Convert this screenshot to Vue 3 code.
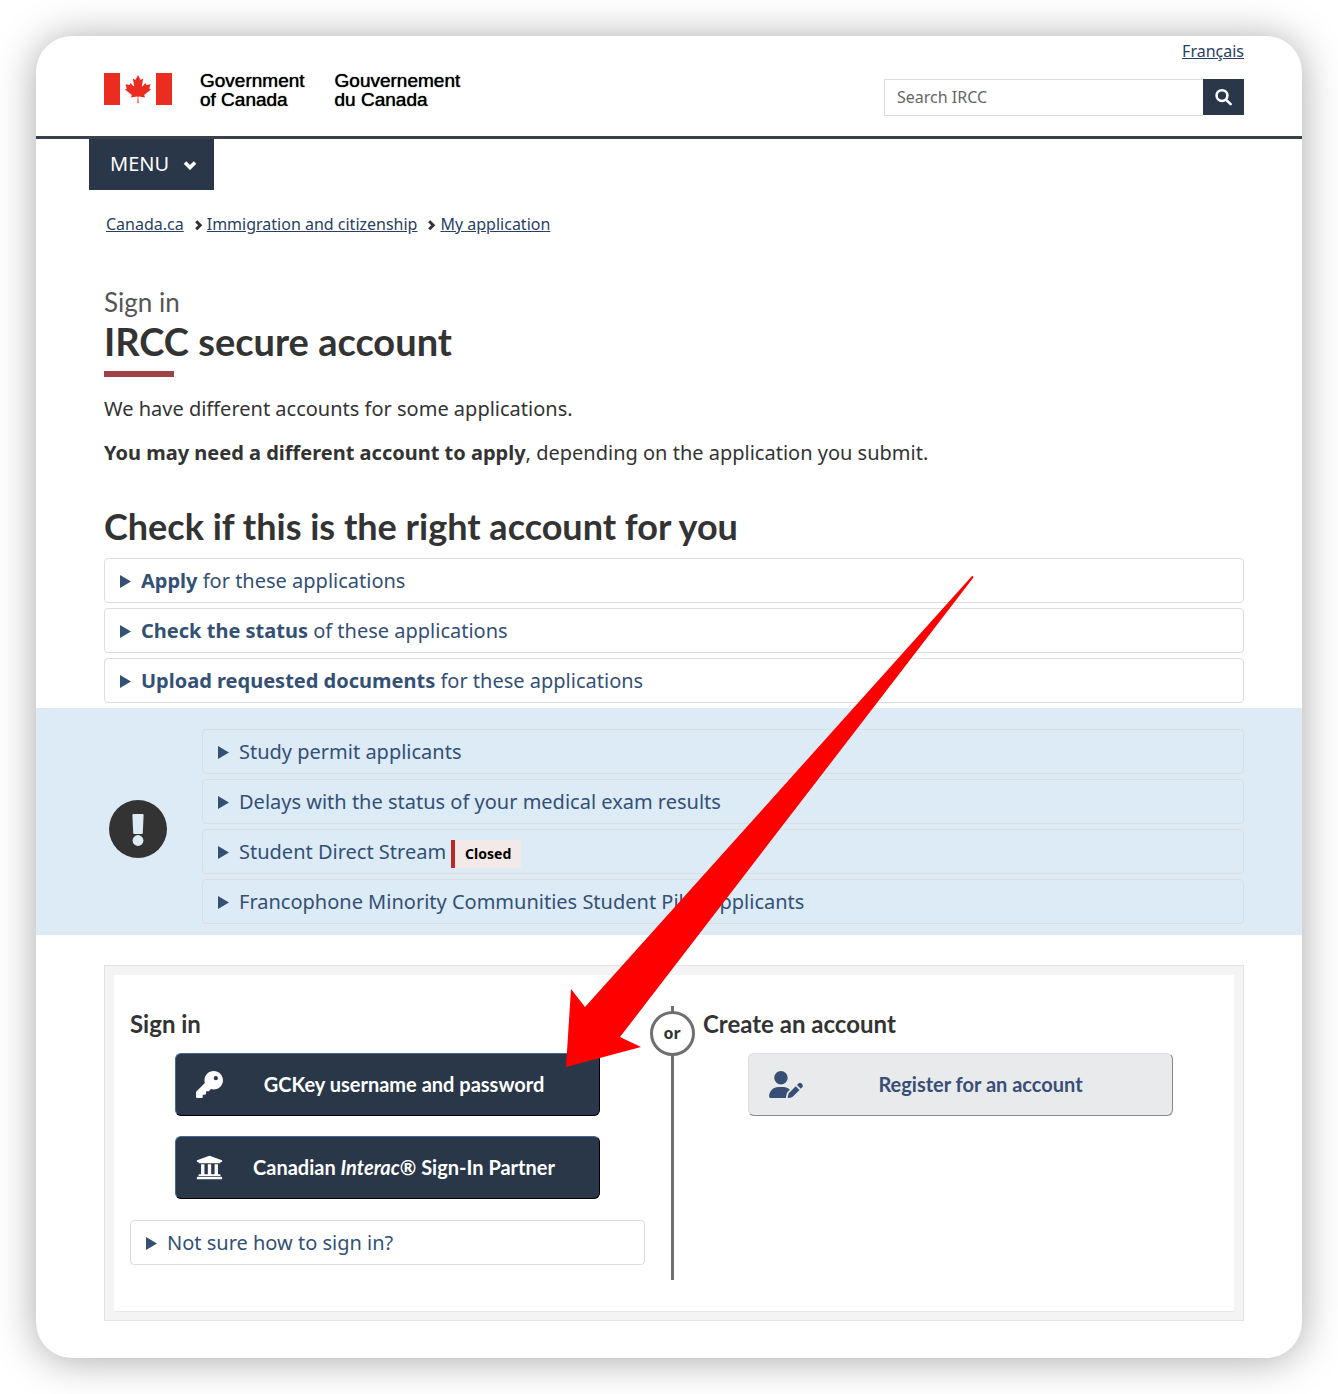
<script setup>
const checks = [
  { strong: 'Apply', rest: ' for these applications' },
  { strong: 'Check the status', rest: ' of these applications' },
  { strong: 'Upload requested documents', rest: ' for these applications' },
]

const notices = [
  { text: 'Study permit applicants' },
  { text: 'Delays with the status of your medical exam results' },
  { text: 'Student Direct Stream', tag: 'Closed' },
  { text: 'Francophone Minority Communities Student Pilot applicants' },
]

const crumbs = ['Canada.ca', 'Immigration and citizenship', 'My application']
</script>

<template>
  <div class="page">
    <header class="banner">
      <a class="brand" href="#" aria-label="Government of Canada">
        <svg class="flag" viewBox="0 0 68 32" aria-hidden="true">
          <path d="M0 0h16v32H0zM52 0h16v32H52z" />
          <path
            transform="translate(.4 -.8) scale(.007)"
            d="m4890 4430-45-863a95 95 0 0 1 111-98l859 151-116-320a65 65 0 0 1 20-73l941-762-212-99a65 65 0 0 1-34-79l186-572-542 115a65 65 0 0 1-73-38l-105-247-423 454a65 65 0 0 1-111-57l204-1052-327 189a65 65 0 0 1-91-27l-332-652-332 652a65 65 0 0 1-91 27l-327-189 204 1052a65 65 0 0 1-111 57l-423-454-105 247a65 65 0 0 1-73 38l-542-115 186 572a65 65 0 0 1-34 79l-212 99 941 762a65 65 0 0 1 20 73l-116 320 859-151a95 95 0 0 1 111 98l-45 863z"
          />
        </svg>
        <span class="brand-name">Government<br />of Canada</span>
        <span class="brand-name">Gouvernement<br />du Canada</span>
      </a>
      <div class="tools">
        <a class="lang" href="#" lang="fr">Français</a>
        <form class="search" role="search" @submit.prevent>
          <input type="search" placeholder="Search IRCC" aria-label="Search IRCC" />
          <button type="submit" aria-label="Search">
            <svg viewBox="0 0 18 18" aria-hidden="true">
              <circle cx="7" cy="7.6" r="5.4" />
              <path d="M11.2 11.8l4.4 4.4" />
            </svg>
          </button>
        </form>
      </div>
    </header>

    <nav class="menu-bar" aria-label="Menu">
      <button class="menu" type="button">
        MENU
        <svg viewBox="0 0 14 10" aria-hidden="true"><path d="M2 2.6l5 5 5-5" /></svg>
      </button>
    </nav>

    <nav aria-label="Breadcrumb">
      <ol class="crumbs">
        <li v-for="(crumb, i) in crumbs" :key="crumb">
          <svg v-if="i" viewBox="0 0 8 10" aria-hidden="true"><path d="M1.2 1.2l4 4-4 4" /></svg>
          <a href="#">{{ crumb }}</a>
        </li>
      </ol>
    </nav>

    <main>
      <section class="intro">
        <h1><span class="kicker">Sign in</span>IRCC secure account</h1>
        <p>We have different accounts for some applications.</p>
        <p><strong>You may need a different account to apply</strong>, depending on the application you submit.</p>
        <h2>Check if this is the right account for you</h2>
        <div class="stack">
          <details v-for="item in checks" :key="item.strong">
            <summary><span><strong>{{ item.strong }}</strong>{{ item.rest }}</span></summary>
          </details>
        </div>
      </section>

      <section class="alert">
        <svg class="alert-icon" viewBox="0 0 58 58" aria-hidden="true">
          <circle class="disc" cx="29" cy="29" r="29" />
          <path class="mark" d="M24.4 14h9.2q1 0 1 1l-.8 18q-.1 1-1 1h-7.6q-.9 0-1-1l-.8-18q0-1 1-1z" />
          <circle class="mark" cx="29" cy="40.5" r="5.4" />
        </svg>
        <div class="stack">
          <details v-for="item in notices" :key="item.text">
            <summary>
              <span>{{ item.text }}</span>
              <span v-if="item.tag" class="tag">{{ item.tag }}</span>
            </summary>
          </details>
        </div>
      </section>

      <section class="well">
        <div class="panel">
          <div class="col">
            <h3>Sign in</h3>
            <div class="actions">
              <button class="btn primary" type="button">
                <svg viewBox="0 0 512 512" aria-hidden="true">
                  <path d="M336 352c97.2 0 176-78.8 176-176S433.2 0 336 0S160 78.8 160 176c0 18.7 2.9 36.8 8.3 53.7L7 391c-4.5 4.5-7 10.6-7 17v80c0 13.3 10.7 24 24 24h80c13.3 0 24-10.7 24-24V448h40c13.3 0 24-10.7 24-24V384h40c6.4 0 12.5-2.5 17-7l33.3-33.3c16.9 5.4 35 8.3 53.7 8.3zM376 96a40 40 0 1 1 0 80 40 40 0 1 1 0-80z" />
                </svg>
                <span>GCKey username and password</span>
              </button>
              <button class="btn primary" type="button">
                <svg viewBox="0 0 512 512" aria-hidden="true">
                  <path d="M496 128v16a8 8 0 0 1-8 8h-24v12c0 6.627-5.373 12-12 12H60c-6.627 0-12-5.373-12-12v-12H24a8 8 0 0 1-8-8v-16a8 8 0 0 1 4.941-7.392l232-88a7.996 7.996 0 0 1 6.118 0l232 88A8 8 0 0 1 496 128zm-24 304H40c-13.255 0-24 10.745-24 24v16a8 8 0 0 0 8 8h464a8 8 0 0 0 8-8v-16c0-13.255-10.745-24-24-24zM96 192v192H60c-6.627 0-12 5.373-12 12v20h416v-20c0-6.627-5.373-12-12-12h-36V192h-64v192h-64V192h-64v192h-64V192H96z" />
                </svg>
                <span>Canadian <em>Interac</em>® Sign-In Partner</span>
              </button>
            </div>
            <details>
              <summary><span>Not sure how to sign in?</span></summary>
            </details>
          </div>

          <div class="divider"><span>or</span></div>

          <div class="col">
            <h3>Create an account</h3>
            <div class="actions">
              <button class="btn plain" type="button">
                <svg class="wide" viewBox="0 0 640 512" aria-hidden="true">
                  <path d="M224 256A128 128 0 1 0 224 0a128 128 0 1 0 0 256zm-45.7 48C79.8 304 0 383.8 0 482.3C0 498.7 13.3 512 29.7 512H322.8c-3.1-8.8-3.7-18.4-1.4-27.8l15-60.1c2.8-11.3 8.6-21.5 16.8-29.7l40.3-40.3c-32.1-31-75.7-50.1-123.9-50.1H178.3zm435.5-68.3c-15.6-15.6-40.9-15.6-56.6 0l-29.4 29.4 71 71 29.4-29.4c15.6-15.6 15.6-40.9 0-56.6l-14.4-14.4zM375.9 417c-4.1 4.1-7 9.2-8.4 14.9l-15 60.1c-1.4 5.5 .2 11.2 4.2 15.2s9.7 5.6 15.2 4.2l60.1-15c5.6-1.4 10.8-4.3 14.9-8.4L576.1 358.7l-71-71L375.9 417z" />
                </svg>
                <span>Register for an account</span>
              </button>
            </div>
          </div>
        </div>
      </section>
    </main>

    <!-- Annotation arrow pointing at the GCKey button -->
    <svg class="arrow" viewBox="0 0 408 492" aria-hidden="true">
      <path d="M0 491L5 413 19 431 406 0q2 0 1 2L54 461 75 471z" />
    </svg>
  </div>
</template>

<style>
body {
  margin: 0;
  background: #fff;
}
</style>

<style scoped>
* {
  box-sizing: border-box;
}

.page {
  position: relative;
  margin: 36px;
  padding-bottom: 37px;
  border-radius: 36px;
  background: #fff;
  box-shadow: 0 2px 40px rgba(0, 0, 0, 0.34);
  color: #333;
  font: 20px/33px "Noto Sans", sans-serif;
}

a {
  color: #284162;
}

/* Header */
.banner {
  display: flex;
  justify-content: space-between;
  align-items: flex-start;
  height: 103px;
  padding: 0 58px 0 68px;
  border-bottom: 3px solid #38414d;
}

.brand {
  display: flex;
  padding-top: 35px;
  color: #000;
  text-decoration: none;
}

.flag {
  width: 68px;
  height: 32px;
  margin: 2px 28px 0 0;
  fill: #eb2d21;
}

.brand-name {
  margin-right: 30px;
  font: 19px/19px "Liberation Sans", sans-serif;
  text-shadow: 0 0 1px #000;
}

.tools {
  display: flex;
  flex-direction: column;
  align-items: flex-end;
  width: 360px;
}

.lang {
  margin-top: 3px;
  font-size: 16px;
  line-height: 24px;
}

.search {
  display: flex;
  width: 100%;
  height: 37px;
  margin-top: 16px;
}

.search input {
  flex: 1;
  min-width: 0;
  margin: 0;
  padding: 0 12px 2px;
  border: 1px solid #ddd;
  border-right: 0;
  border-radius: 0;
  outline: 0;
  background: #fff;
  color: #555;
  font: 16px/24px "Noto Sans", sans-serif;
  appearance: none;
}

.search input::placeholder {
  color: #666;
  opacity: 1;
}

.search button {
  display: flex;
  align-items: center;
  justify-content: center;
  width: 41px;
  height: 36px;
  padding: 0;
  border: 0;
  background: #2a3749;
}

.search svg {
  width: 18px;
  height: 18px;
  fill: none;
  stroke: #fff;
  stroke-width: 2.6;
  stroke-linecap: round;
}

.menu-bar {
  padding-left: 53px;
}

.menu {
  display: flex;
  align-items: center;
  justify-content: space-between;
  width: 125px;
  height: 51px;
  padding: 0 17px 2px 21px;
  border: 0;
  background: #2a3749;
  color: #fff;
  font: 20px/33px "Noto Sans", sans-serif;
}

.menu svg {
  width: 14px;
  height: 10px;
  margin-top: 2px;
  fill: none;
  stroke: #fff;
  stroke-width: 3.6;
}

.crumbs {
  display: flex;
  margin: 22px 0 0;
  padding: 0 58px 0 70px;
  list-style: none;
  font-size: 16px;
  line-height: 24px;
}

.crumbs li {
  display: flex;
  align-items: center;
}

.crumbs svg {
  width: 8px;
  height: 10px;
  margin: 1px 4px 0 11px;
  fill: none;
  stroke: #333;
  stroke-width: 3;
}

/* Introduction */
.intro {
  padding: 0 58px 5px 68px;
}

h1,
h2,
h3 {
  margin: 0;
  font-family: Lato, sans-serif;
  font-weight: 700;
}

h1 {
  margin-top: 48px;
  font-size: 38px;
  line-height: 42px;
}

h1::after {
  content: "";
  display: block;
  width: 70px;
  height: 6px;
  margin-top: 9px;
  background: #a04144;
}

.kicker {
  display: block;
  color: #555;
  font-size: 26px;
  font-weight: 400;
  line-height: 36px;
}

p {
  margin: 0 0 11px;
}

h1 + p {
  margin-top: 15px;
}

h2 {
  margin-top: 35px;
  font-size: 36px;
  line-height: 44px;
}

.intro .stack {
  margin-top: 10px;
}

/* Expandable rows */
.stack {
  display: flex;
  flex-direction: column;
  gap: 5px;
}

details {
  border: 1px solid #ddd;
  border-radius: 4px;
  color: #335075;
}

summary {
  display: flex;
  align-items: center;
  padding: 5px 15px;
  list-style: none;
  cursor: pointer;
}

summary::before {
  content: "";
  width: 11px;
  height: 13px;
  margin: 2px 10px 0 0;
  background: #335075;
  clip-path: polygon(0 0, 100% 50%, 0 100%);
}

.tag {
  margin: 5px 0 0 5px;
  padding: 0 10px;
  border-left: 4px solid #bc2a25;
  background: #f3e9e8;
  color: #000;
  font-size: 14px;
  font-weight: 700;
  line-height: 28px;
}

/* Alert band */
.alert {
  display: grid;
  grid-template-columns: 58px 1fr;
  column-gap: 35px;
  align-items: center;
  padding: 21px 58px 11px 73px;
  background: #ddebf7;
}

.alert-icon {
  width: 58px;
  height: 58px;
  margin-top: 4px;
}

.disc {
  fill: #333;
}

.mark {
  fill: #ddebf7;
}

/* Sign-in panel */
.well {
  margin: 30px 58px 0 68px;
  padding: 9px 9px 8px;
  border: 1px solid #e3e3e3;
  background: #f4f4f4;
}

.panel {
  display: grid;
  grid-template-columns: 1fr 58px 1fr;
  padding: 31px 16px;
  border-bottom: 1px solid #e8e8e8;
  background: #fff;
}

h3 {
  margin-top: 1px;
  font-size: 24px;
  line-height: 34px;
}

.actions {
  display: flex;
  flex-direction: column;
  gap: 20px;
  margin: 12px 45px 21px;
}

.btn {
  display: flex;
  align-items: center;
  width: 100%;
  height: 63px;
  padding: 0 14px 0 20px;
  border: 1px solid;
  border-radius: 6px;
  font: 700 20px/28px Lato, sans-serif;
}

.btn svg {
  flex: none;
  width: 27px;
  height: 27px;
  fill: currentColor;
}

.btn .wide {
  width: 34px;
}

.btn span {
  flex: 1;
  padding-bottom: 2px;
  text-align: center;
}

.primary {
  border-color: #466a96 #000 #000 #466a96;
  background: #2a3749;
  color: #fff;
}

.plain {
  border-color: #dcdee1 #888 #888 #dcdee1;
  background: #e9eaec;
  color: #384f75;
}

.divider {
  display: flex;
  justify-content: center;
  height: 274px;
  padding-top: 5px;
  background: linear-gradient(#6f6f6f, #6f6f6f) 26px 0 / 3px 100% no-repeat;
}

.divider span {
  width: 45px;
  height: 45px;
  margin-right: 4px;
  border: 3px solid #6f6f6f;
  border-radius: 50%;
  background: #fff;
  font-size: 16px;
  font-weight: 700;
  line-height: 38px;
  text-align: center;
}

.arrow {
  position: absolute;
  top: 540px;
  left: 530px;
  width: 408px;
  height: 492px;
  fill: #f00;
  pointer-events: none;
}
</style>
